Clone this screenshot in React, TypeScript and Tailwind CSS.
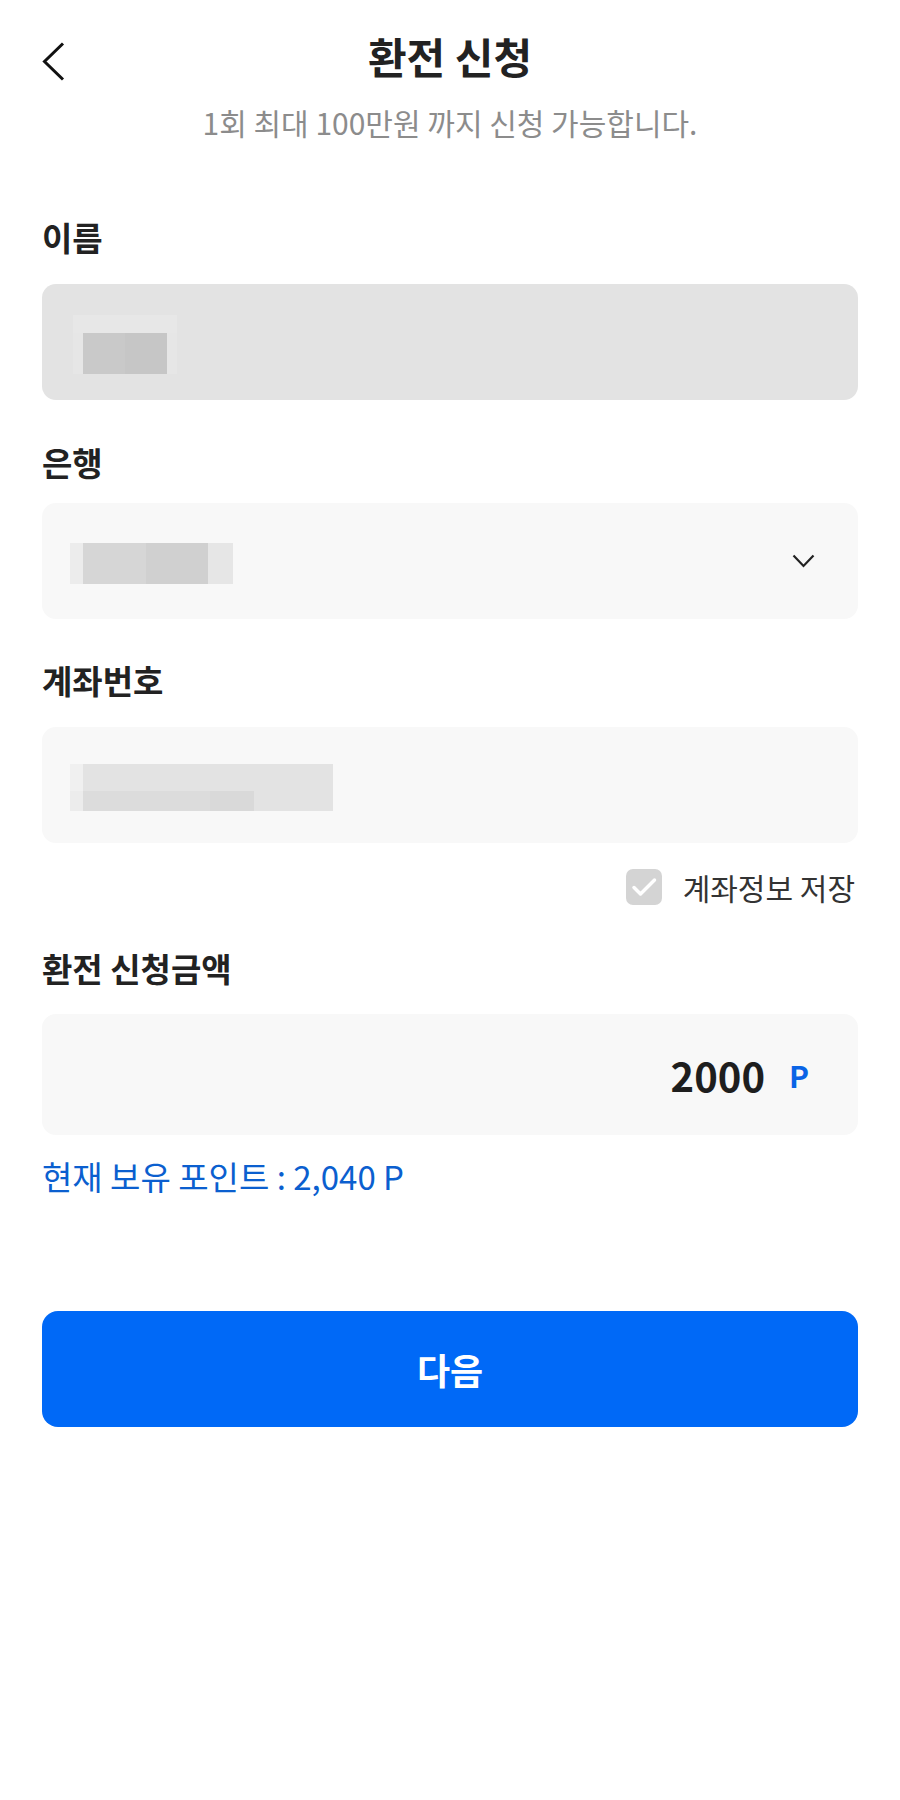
import { ReactNode } from 'react';

export default function App() {
    return (
        <div className="min-h-[1800px] bg-white font-['Noto_Sans_CJK_KR','Noto_Sans',sans-serif] text-[#222]">
            {/* Header */}
            <header className="relative pt-[30px] text-center">
                <button className="absolute left-[42px] top-[42px] w-[24px] h-[40px]">
                    <svg width="24" height="40" viewBox="0 0 24 40" fill="none">
                        <path d="M21 1.5 L2.5 19.5 L21 37.5" stroke="#111" strokeWidth="3" strokeLinejoin="miter" />
                    </svg>
                </button>
                <h1 className="text-[42px] leading-[52px] font-bold text-[#222]">환전 신청</h1>
                <p className="mt-[22px] text-[30px] leading-[36px] text-[#8c8c8c]">1회 최대 100만원 까지 신청 가능합니다.</p>
            </header>

            <main className="px-[42px]">
                {/* 이름 */}
                <Label className="mt-[77px]">이름</Label>
                <div className="mt-[27px] h-[116px] rounded-[14px] bg-[#e3e3e3] flex items-center pl-[31px]">
                    <div className="flex flex-col w-[104px] mt-[4px]">
                        <div className="h-[18px] bg-[#e7e7e7]" />
                        <div className="h-[41px] flex">
                            <div className="w-[10px] bg-[#e6e6e6]" />
                            <div className="w-[42px] bg-[#c9c9c9]" />
                            <div className="w-[42px] bg-[#c6c6c6]" />
                            <div className="flex-1 bg-[#e6e6e6]" />
                        </div>
                    </div>
                </div>

                {/* 은행 */}
                <Label className="mt-[42px]">은행</Label>
                <div className="mt-[21px] h-[116px] rounded-[14px] bg-[#f8f8f8] flex items-center justify-between pl-[28px] pr-[43px]">
                    <div className="flex h-[41px] mt-[4px]">
                        <div className="w-[13px] bg-[#ececec]" />
                        <div className="w-[63px] bg-[#d6d6d6]" />
                        <div className="w-[62px] bg-[#d0d0d0]" />
                        <div className="w-[25px] bg-[#e6e6e6]" />
                    </div>
                    <svg width="23" height="14" viewBox="0 0 23 14" fill="none">
                        <path d="M1.5 1.5 L11.5 12 L21.5 1.5" stroke="#222" strokeWidth="2.2" />
                    </svg>
                </div>

                {/* 계좌번호 */}
                <Label className="mt-[41px]">계좌번호</Label>
                <div className="mt-[27px] h-[116px] rounded-[14px] bg-[#f8f8f8] flex items-center pl-[28px]">
                    <div className="flex flex-col w-[263px] mt-[4px]">
                        <div className="h-[27px] flex">
                            <div className="w-[13px] bg-[#f0f0f0]" />
                            <div className="flex-1 bg-[#e3e3e3]" />
                        </div>
                        <div className="h-[20px] flex">
                            <div className="w-[13px] bg-[#ececec]" />
                            <div className="w-[127px] bg-[#dcdcdc]" />
                            <div className="w-[44px] bg-[#d9d9d9]" />
                            <div className="flex-1 bg-[#e3e3e3]" />
                        </div>
                    </div>
                </div>

                {/* 저장 체크 */}
                <div className="mt-[26px] flex items-center justify-end gap-[21px] pr-[3px]">
                    <div className="w-[36px] h-[36px] rounded-[7px] bg-[#d4d4d4] flex items-center justify-center">
                        <svg width="36" height="36" viewBox="0 0 36 36" fill="none">
                            <path d="M8 18.5 L14.5 25 L28.5 11" stroke="#fff" strokeWidth="3.5" strokeLinecap="round" strokeLinejoin="round" />
                        </svg>
                    </div>
                    <span className="text-[30px] leading-[36px] text-[#333]">계좌정보 저장</span>
                </div>

                {/* 환전 신청금액 */}
                <Label className="mt-[43px]">환전 신청금액</Label>
                <div className="mt-[26px] h-[121px] rounded-[14px] bg-[#f8f8f8] flex items-center justify-end pr-[49px]">
                    <span className="text-[40px] leading-[48px] font-bold text-[#1e1e1e]">2000</span>
                    <span className="ml-[24px] text-[30px] leading-[40px] font-bold text-[#0a64e6]">P</span>
                </div>
                <p className="mt-[21px] text-[33px] leading-[40px] text-[#0b5fcf]">현재 보유 포인트 : 2,040 P</p>

                {/* 다음 */}
                <button className="mt-[115px] w-full h-[116px] rounded-[16px] bg-[#0069f7] text-white text-[36px] font-bold">
                    다음
                </button>
            </main>
        </div>
    );
}

function Label({ children, className }: { children: ReactNode; className?: string }) {
    return <h2 className={`text-[33px] leading-[40px] font-bold text-[#222] ${className ?? ''}`}>{children}</h2>;
}
